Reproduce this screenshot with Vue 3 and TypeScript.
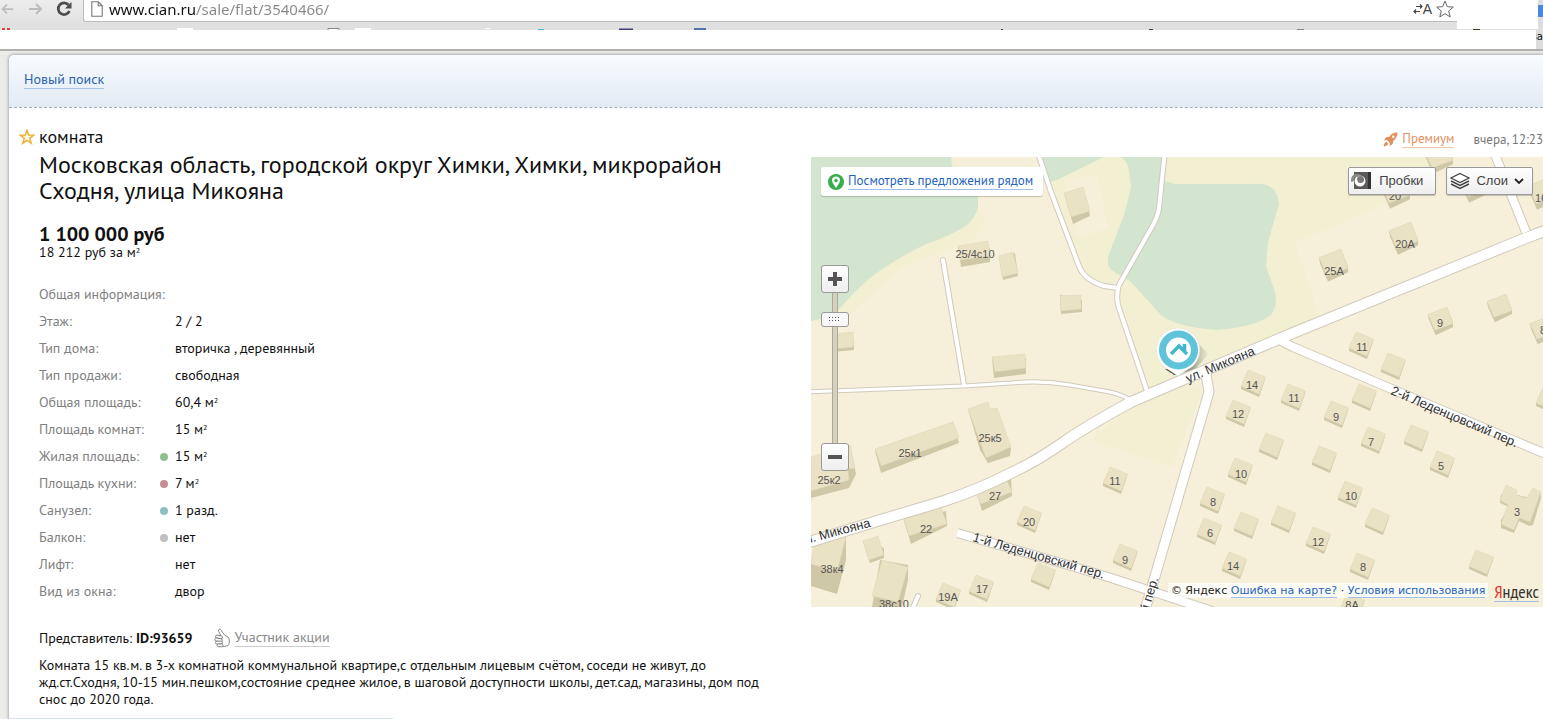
<script setup lang="ts">
import { ref } from 'vue'

interface Fact { label: string; value: string; area?: boolean; dot?: string }
interface Label { x: number; y: number; t: string }

const url = ref('www.cian.ru/sale/flat/3540466/')
const zoom = ref(86)

const facts: Fact[] = [
  { label: 'Общая информация:', value: '' },
  { label: 'Этаж:', value: '2 / 2' },
  { label: 'Тип дома:', value: 'вторичка , деревянный' },
  { label: 'Тип продажи:', value: 'свободная' },
  { label: 'Общая площадь:', value: '60,4', area: true },
  { label: 'Площадь комнат:', value: '15', area: true },
  { label: 'Жилая площадь:', value: '15', area: true, dot: 'green' },
  { label: 'Площадь кухни:', value: '7', area: true, dot: 'red' },
  { label: 'Санузел:', value: '1 разд.', dot: 'teal' },
  { label: 'Балкон:', value: 'нет', dot: 'gray' },
  { label: 'Лифт:', value: 'нет' },
  { label: 'Вид из окна:', value: 'двор' }
]

const description = `Комната 15 кв.м. в 3-х комнатной коммунальной квартире,с отдельным лицевым счётом, соседи не живут, до
жд.ст.Сходня, 10-15 мин.пешком,состояние среднее жилое, в шаговой доступности школы, дет.сад, магазины, дом под
снос до 2020 года.`

const houses: [number, number][] = [
  [1349, 332], [1381, 353], [1324, 401], [1352, 384], [1361, 427], [1404, 425], [1430, 451], [1312, 446],
  [1338, 481], [1365, 508], [1306, 527], [1350, 553], [1469, 550], [1340, 593], [1536, 387], [1241, 370],
  [1281, 384], [1226, 400], [1259, 433], [1228, 458], [1200, 487], [1197, 518], [1234, 512], [1271, 506],
  [1222, 552], [1103, 467], [1113, 544], [1017, 506], [969, 575], [936, 583], [1031, 563]
]
const tilted: [number, number, number][] = [
  [1319, 249, 29], [1389, 222, 29], [1428, 307, 25], [1487, 294, 25], [1530, 316, 25], [1381, 176, 29],
  [1424, 141, 29], [1460, 170, 29], [1528, 177, 29]
]

const labels: Label[] = [
  { x: 975, y: 258, t: '25/4с10' }, { x: 1334, y: 275, t: '25А' }, { x: 1405, y: 248, t: '20А' },
  { x: 1395, y: 200, t: '20' }, { x: 1541, y: 202, t: '16' }, { x: 1440, y: 327, t: '9' },
  { x: 1543, y: 334, t: '8' }, { x: 1362, y: 351, t: '11' }, { x: 1252, y: 389, t: '14' },
  { x: 1294, y: 402, t: '11' }, { x: 1336, y: 421, t: '9' }, { x: 1238, y: 418, t: '12' },
  { x: 1371, y: 446, t: '7' }, { x: 1441, y: 470, t: '5' }, { x: 1241, y: 478, t: '10' },
  { x: 1351, y: 500, t: '10' }, { x: 1213, y: 506, t: '8' }, { x: 1210, y: 537, t: '6' },
  { x: 1318, y: 546, t: '12' }, { x: 1363, y: 571, t: '8' }, { x: 1233, y: 570, t: '14' },
  { x: 1517, y: 516, t: '3' }, { x: 1115, y: 485, t: '11' }, { x: 1125, y: 564, t: '9' },
  { x: 990, y: 442, t: '25к5' }, { x: 910, y: 457, t: '25к1' }, { x: 829, y: 484, t: '25к2' },
  { x: 995, y: 500, t: '27' }, { x: 926, y: 533, t: '22' }, { x: 1029, y: 526, t: '20' },
  { x: 832, y: 573, t: '38к4' }, { x: 894, y: 608, t: '38с10' }, { x: 948, y: 601, t: '19А' },
  { x: 982, y: 593, t: '17' }, { x: 1352, y: 609, t: '8А' }
]

const main = 'M800 545L874 522L944 501Q980 489 1011 473Q1035 462 1061 444Q1085 427 1131 402L1180 381L1293 333L1526 238L1560 225'
const lane = 'M1206 374L1209 392L1151 590L1142 620'
const first = 'M957 533L1051 560L1108 577L1215 612'
const second = 'M1281 341L1293 347L1380 384L1560 460'
const north = 'M1492 147L1526 232'
const paths = 'M1037 150L1051 192L1079 266Q1084 280 1104 286L1118 288M1165 150L1159 208Q1158 216 1153 225L1119 285Q1116 294 1118 305L1148 394M943 260L964 385M918 596L912 610'
const trail = 'M805 392L964 386L1011 383Q1040 380 1070 385L1110 392Q1123 395 1132 401'
</script>

<template>
  <div class="page">
    <header class="browser">
      <div class="toolbar">
        <button class="nav" aria-label="Назад">
          <svg width="16" height="16" viewBox="0 0 16 16"><path d="M15 8H3M8 3L3 8l5 5" fill="none" stroke="#bcbcbc" stroke-width="2" /></svg>
        </button>
        <button class="nav" aria-label="Вперёд">
          <svg width="16" height="16" viewBox="0 0 16 16"><path d="M1 8h12M8 3l5 5-5 5" fill="none" stroke="#bcbcbc" stroke-width="2" /></svg>
        </button>
        <button class="nav" aria-label="Обновить">
          <svg width="16" height="16" viewBox="0 0 16 16"><path d="M12.5 4A5.8 5.8 0 1 0 13.4 10" fill="none" stroke="#4c4c4c" stroke-width="2.8" /><path d="M15.500 1v6.500H9z" fill="#4c4c4c" /></svg>
        </button>
        <div class="address">
          <svg class="doc" width="12" height="16" viewBox="0 0 12 16"><path d="M.8.8h6.400l4 4v10.400H.8zM7.200.8v4h4" fill="#fff" stroke="#777" stroke-width="1.100" /></svg>
          <input v-model="url" class="url" type="text" aria-label="Адрес страницы" spellcheck="false" />
          <button class="translate" aria-label="Перевести">
            <svg width="10" height="12" viewBox="0 0 10 12"><path d="M3 3.500h6M7 1.500l2 2-2 2M7 8.500H1M3 6.500l-2 2 2 2" fill="none" stroke="#444" stroke-width="1.200" /></svg>A
          </button>
          <button class="fav" aria-label="В закладки">
            <svg width="18" height="18" viewBox="0 0 18 18"><path d="M9 1l2.300 5.700 6 .4-4.600 3.900 1.500 5.900L9 13.700l-5.200 3.200 1.500-5.900L.7 7.100l6-.4z" fill="#fff" stroke="#666" /></svg>
          </button>
        </div>
        <div class="corner"><i></i></div>
      </div>
      <div class="bookmarks">
        <svg width="1543" height="3" viewBox="0 0 1543 3">
          <path d="M2 2h3M7 2h3" stroke="#d44" stroke-width="2" />
          <path d="M177 1h16v2h-16zM355 1h16v2h-16zM485 1h5v1h-5z" fill="#fff" />
          <path d="M328 3V1.500h11V3" fill="#fff" stroke="#888" />
          <path d="M538 2h6v1h-6z" fill="#55b8d0" /><path d="M619 1.500h14V3h-14z" fill="#3c3f78" />
          <path d="M694 1h12v2h-12z" fill="#5575aa" /><path d="M1001 2h2v1h-2zM1149 2h4v1h-4z" fill="#444" />
          <path d="M1297 2h7v1h-7z" fill="#888" /><path d="M1473 2h7v1h-7z" fill="#443c20" />
        </svg>
      </div>
      <div class="blank"><span>ва</span></div>
    </header>

    <main class="card">
      <nav class="search"><a href="#">Новый поиск</a></nav>
      <div class="content">
        <section class="info">
          <div class="kind">
            <svg width="16" height="16" viewBox="0 0 16 16"><path d="M8 1.400l1.700 4.700 5 .1-4 3.100 1.500 4.900L8 11.300l-4.200 2.900 1.500-4.900-4-3.100 5-.1z" fill="#fff8e6" stroke="#eeb13c" stroke-width="1.500" /></svg>
            <span>комната</span>
          </div>
          <h1>Московская область, городской округ Химки, Химки, микрорайон<br />Сходня, улица Микояна</h1>
          <div class="price">1 100 000 руб</div>
          <div class="rate">18 212 руб за м<sup>2</sup></div>
          <table>
            <tbody>
              <tr v-for="f in facts" :key="f.label">
                <th scope="row">{{ f.label }}</th>
                <td class="mark"><i v-if="f.dot" :class="f.dot"></i></td>
                <td>{{ f.value }}<template v-if="f.area"> м<sup>2</sup></template></td>
              </tr>
            </tbody>
          </table>
          <div class="agent">
            <span>Представитель: <b>ID:93659</b></span>
            <svg width="16" height="20" viewBox="0 0 16 20"><g fill="#fff" stroke="#777" stroke-width=".9"><path d="M7 8.500C6.500 6 4.500 4 4.500 2.500 4.500 1 6 .5 7 2c1 1.700 2.500 4 4 5.500 2 .3 4 2 4.300 4.500.2 2.500-.3 4.500-1.300 5.500-2 .7-4.500 1.200-6 1.200z" /><rect x="1.500" y="7.500" width="7" height="3" rx="1.500" transform="rotate(12 5 9)" /><rect x=".8" y="10.300" width="7.500" height="3" rx="1.500" transform="rotate(8 4 12)" /><rect x="1.500" y="13.200" width="7" height="2.800" rx="1.400" /><rect x="3" y="16" width="6" height="2.700" rx="1.300" /></g></svg>
            <a href="#">Участник акции</a>
          </div>
          <p class="description">{{ description }}</p>
        </section>

        <section class="side">
          <div class="meta">
            <svg width="15" height="15" viewBox="0 0 15 15"><path d="M14.500.5c-4-.2-6.500 1.700-8.300 4.300L3 5.200.8 8.400l3-.4L7 11.200l-.5 3 3.200-2.200.5-3.200c2.700-1.900 4.500-4.500 4.300-8.300zM3.500 9.800C1.500 10.500 1 12.500.6 14.500c2-.3 4-1 4.600-3z" fill="#e2905f" /><circle cx="10.300" cy="4.700" r="1.200" fill="#fff" /></svg>
            <a href="#">Премиум</a>
            <time>вчера, 12:23</time>
          </div>
          <div class="map">
            <svg class="canvas" viewBox="811 157 732 450" preserveAspectRatio="xMinYMin slice" role="img" aria-label="Карта">
              <defs>
                <g id="house">
                  <path d="M0 16L0 19L18 27L24 10L24.500 7L18 24z" fill="#cfc8a8" />
                  <path d="M7 0L24.500 7L18 24L0 16z" fill="#e9e2c4" stroke="#ddd5b4" stroke-width=".5" />
                </g>
                <g id="block">
                  <path d="M0 9L22 1L29 19V24L9 34L1 15z" fill="#cfc8a8" />
                  <path d="M0 9L22 0L29 20L8 28z" fill="#e9e2c4" stroke="#ddd5b4" stroke-width=".5" />
                </g>
                <linearGradient id="shadow" x1="0.35" x2="1"><stop offset="0" stop-color="#444" stop-opacity=".9" /><stop offset="1" stop-color="#777" stop-opacity="0" /></linearGradient>
              </defs>
              <path d="M811 157h740v460H811z" fill="#f6f0da" />
              <path d="M950 157H1040L1045 176L1082 270L1104 288H1118L1148 396L1285 340L1320 318L1295 243L1382 205L1450 157zM811 321L840 324L900 268L975 240L985 220V195L950 157zM1091 441L1172 467L1203 390L1190 382L1131 404z" fill="#f3efd2" />
              <path d="M1064 180L1098 175L1108 228L1078 238zM951 157H1040L1080 262L1000 262L985 220z" fill="#f6f0da" />
              <path d="M811 157H951L952 167L972 185L978 197V208Q975 217 969 223Q962 231 924 245Q900 257 884 268Q868 278 854 293L838 310Q828 318 811 321zM1041 157L1050 182L1057 180L1104 157zM1121 157Q1128 162 1129 170L1131 187L1124 215L1108 257Q1107 265 1111 270L1130 281L1161 315Q1176 327 1217 330Q1255 327 1271 315Q1278 305 1275 292L1266 266L1268 242L1279 204Q1278 191 1269 186Q1262 183 1250 184H1174L1165 181L1166 157z" fill="#d3e5ce" />

              <g fill="#cfc8a8">
                <path d="M811 460L850 445L856 474L849 488L811 498z" /><path d="M875 451L953 422L959 443L881 473z" />
                <path d="M968 409L1011 448L1010 456L988 463L980 450z" /><path d="M976 490L1011 478L1012 496L982 511z" />
                <path d="M904 521L946 511L947 526L911 544z" /><path d="M811 564L846 537V560L837 594L811 586z" />
                <path d="M880 560L908 565L908 580L902 607H872z" /><path d="M863 541L884 548V558L870 563z" />
                <path d="M958 246L990 248V262L961 267z" /><path d="M1000 258L1015 253L1018 276L1003 280z" />
                <path d="M992 358L1026 358V374L994 378z" /><path d="M1060 295L1082 300V312L1061 314z" />
                <path d="M833 334L854 342V350L833 352z" /><path d="M1064 193L1088 205L1090 216L1073 224z" />
                <path d="M1501 494L1509 506L1517 495L1530 498L1541 492V498L1533 525L1529 526L1519 521L1514 533L1501 528V520L1509 507L1500 503z" />
              </g>
              <g fill="#e9e2c4" stroke="#ddd5b4" stroke-width=".5">
                <path d="M811 457L850 445L855 468L848 469L849 480L811 491z" /><path d="M875 449L953 422L959 438L881 466z" />
                <path d="M968 409L988 402L990 409L997 408L1011 447L986 458L980 442z" /><path d="M976 493L1007 480L1012 492L981 504z" />
                <path d="M904 519L941 507L947 524L909 536z" /><path d="M815 540L846 537L837 572L811 564z" />
                <path d="M882 560L908 567L898 602L872 596z" /><path d="M863 541L878 536L884 555L869 560z" />
                <path d="M958 246L988 241L990 256L960 260z" /><path d="M999 256L1013 252L1018 273L1002 277z" />
                <path d="M992 357L1025 354L1026 368L995 372z" /><path d="M1060 296L1081 295V309L1061 311z" />
                <path d="M833 334L853 332L854 347L833 349z" /><path d="M1064 193L1083 187L1090 211L1071 217z" />
                <path d="M1506 485L1517 490L1516 495L1527 498L1533 488L1541 492L1530 522L1519 518L1514 530L1501 524L1508 505L1500 500z" />
              </g>
              <use v-for="(h, i) in tilted" :key="'t' + i" href="#block" :transform="`translate(${h[0]} ${h[1]}) scale(${h[2] / 29} ${h[2] / 30})`" />
              <use v-for="(h, i) in houses" :key="'h' + i" href="#house" :transform="`translate(${h[0]} ${h[1]})`" />

              <g fill="none" stroke-linejoin="round" stroke="#cfcabb">
                <path :d="paths" stroke-width="6" stroke-linecap="round" /><path :d="trail" stroke-width="5" />
                <path :d="main" stroke-width="12" /><path :d="lane" stroke-width="11" />
                <path :d="first" stroke-width="10" /><path :d="second" stroke-width="10" /><path :d="north" stroke-width="10" />
              </g>
              <g fill="none" stroke-linejoin="round" stroke="#fff">
                <path :d="paths" stroke-width="4" stroke-linecap="round" /><path :d="trail" stroke-width="3" />
                <path :d="main" stroke-width="10" /><path :d="lane" stroke-width="9" />
                <path :d="first" stroke-width="8" /><path :d="second" stroke-width="8" /><path :d="north" stroke-width="8" />
              </g>
              <g class="numbers"><text v-for="(l, i) in labels" :key="i" :x="l.x" :y="l.y">{{ l.t }}</text></g>
              <g class="streets">
                <text transform="translate(1188 383) rotate(-23)">ул. Микояна</text>
                <text transform="translate(806 544) rotate(-15)">л. Микояна</text>
                <text transform="translate(972 541) rotate(16)">1-й Леденцовский пер.</text>
                <text transform="translate(1390 394) rotate(23)">2-й Леденцовский пер.</text>
                <text transform="translate(1148 613) rotate(-73)">й пер.</text>
              </g>
              <path d="M1166 369l6 1 8 5h-6zM1180 374L1196 368L1209 354L1194 340z" fill="url(#shadow)" />
              <path d="M1165 369l5 0 6 4h-5z" fill="#555" />
              <path d="M1178 328a22 22 0 0 1 9 42l-9 6-9-6a22 22 0 0 1 9-42z" fill="#fff" stroke="#d8d8c8" stroke-width=".5" />
              <circle cx="1178.500" cy="350" r="16" fill="#fff" stroke="#5fc4da" stroke-width="7" />
              <path d="M1171 354l8-8 8 8M1184.500 344v7" fill="none" stroke="#45b7cc" stroke-width="3.500" />
            </svg>

            <a class="nearby" href="#">
              <svg width="16" height="16" viewBox="0 0 16 16"><circle cx="8" cy="8" r="8" fill="#37ae4b" /><path d="M8 14C6 10.500 4 8.500 4 6.500a4 4 0 0 1 8 0C12 8.500 10 10.500 8 14z" fill="#fff" /><circle cx="8" cy="6.500" r="1.700" fill="#37ae4b" /></svg>
              <span>Посмотреть предложения рядом</span>
            </a>
            <div class="tools">
              <button class="tool traffic">
                <svg width="20" height="18" viewBox="0 0 20 18"><path d="M3 0h17v17H3z" fill="#5a5a5a" /><path d="M17 0h3v17h-3z" fill="#333" /><circle cx="9" cy="9" r="5.500" fill="#fff" /><circle cx="9.500" cy="7.500" r="3.500" fill="#777" /><path d="M1.500 9.500C1 5 4 2.500 8 3.500" fill="none" stroke="#888" stroke-width="3" /><path d="M5 4.500c-1 4 0 7 3 9l-2-6z" fill="#fff" /></svg>
                <span>Пробки</span>
              </button>
              <button class="tool layers" aria-haspopup="menu">
                <svg width="20" height="18" viewBox="0 0 20 18"><path d="M10 1.500l9 4.500-9 4.500L1 6z" fill="#fff" stroke="#444" stroke-width="1.200" /><path d="M1 9l9 4.500L19 9M1 12l9 4.500 9-4.500" fill="none" stroke="#444" stroke-width="1.400" /></svg>
                <span>Слои</span>
                <svg width="10" height="6" viewBox="0 0 10 6"><path d="M1 1l4 4 4-4" fill="none" stroke="#222" stroke-width="1.800" /></svg>
              </button>
            </div>
            <div class="zoom">
              <button aria-label="Приблизить"><svg width="14" height="14" viewBox="0 0 14 14"><path d="M7 0v14M0 7h14" stroke="#555" stroke-width="4" /></svg></button>
              <input v-model="zoom" type="range" min="0" max="100" aria-label="Масштаб" />
              <button aria-label="Отдалить"><svg width="14" height="14" viewBox="0 0 14 14"><path d="M0 7h14" stroke="#555" stroke-width="4" /></svg></button>
            </div>
            <div class="legal">
              <span class="copy">© Яндекс <a href="#">Ошибка на карте?</a> · <a href="#">Условия использования</a></span>
              <a class="logo" href="#"><b>Я</b>ндекс</a>
            </div>
          </div>
        </section>
      </div>
      <hr />
    </main>
  </div>
</template>

<style>
body { margin: 0; background: #fff; overflow: hidden; }
</style>

<style scoped>
* { box-sizing: border-box; }
.page { font: 14px/17px "PT Sans", "Noto Sans", sans-serif; color: #111; background: #ecece9; min-height: 100vh; display: flex; flex-direction: column; }
button { border: 0; padding: 0; background: none; font: inherit; color: inherit; display: flex; align-items: center; justify-content: center; }
.browser { flex: none; border-bottom: 2px solid #b0b0ae; background: #fff; }
.toolbar { height: 23px; display: flex; background: linear-gradient(#ededed, #e2e2e2); }
.nav { width: 28px; height: 18px; }
.nav:first-child { width: 14px; justify-content: flex-end; margin-right: 8px; }
.nav:nth-child(3) { margin-right: 5px; }
.address { flex: 1; height: 22px; display: flex; align-items: flex-start; background: #fff; border: 1px solid #bbb; border-width: 0 0 1px 1px; border-radius: 0 0 0 3px; padding-left: 7px; }
.doc { margin-top: 1px; }
.url { flex: 1; min-width: 0; height: 19px; border: 0; outline: 0; padding: 0; margin-left: 6px; font: 15px/19px "Noto Sans", sans-serif; color: transparent; background: linear-gradient(90deg, #111 86px, #888 86px); -webkit-background-clip: text; background-clip: text; }
.translate { height: 18px; font: 14px/18px "Liberation Sans", sans-serif; color: #444; }
.fav { margin: 0 3px 0 4px; }
.corner { flex: none; width: 86px; height: 29px; margin-bottom: -6px; background: #fff; border-right: 5px solid #ddd; display: flex; justify-content: flex-end; z-index: 1; }
.corner i { width: 5px; height: 12px; margin: 5px -5px 0 0; background: #4a86e8; }
.bookmarks { height: 7px; background: #e0e0e0; display: flex; align-items: flex-end; overflow: hidden; }
.bookmarks svg { flex: none; display: block; }
.blank { height: 19px; display: flex; justify-content: flex-end; }
.blank span { width: 7px; background: #ddd; font: 10px/14px "DejaVu Sans", sans-serif; overflow: hidden; display: flex; justify-content: flex-end; }

.card { flex: 1; display: flex; flex-direction: column; margin: 4px 0 0 9px; background: #fff; border-radius: 5px 0 0 0; box-shadow: 0 0 3px 1px #aaaeb6; }
.search { height: 53px; padding: 16px 15px 0; background: linear-gradient(#f7fbff, #e2ebf4); border-bottom: 1px dashed #aab; border-radius: 5px 0 0 0; }
.search a { color: #2c62b0; text-decoration: none; border-bottom: 1px solid #a9c3e6; }
.content { display: grid; grid-template-columns: 802fr 732fr; }
.info { padding: 17px 0 0 30px; min-width: 0; }
.kind { display: flex; align-items: center; gap: 4px; margin-left: -20px; font-size: 18px; line-height: 24px; }
h1 { margin: 3px 0 0; font-size: 24px; line-height: 26px; font-weight: 400; white-space: nowrap; }
.price { margin-top: 18px; font-size: 20px; line-height: 24px; font-weight: 700; }
.rate { line-height: 12px; }
sup { font-size: 8px; line-height: 1px; vertical-align: 4px; }
table { margin-top: 23px; border-collapse: collapse; }
th, td { height: 27px; padding: 0; font-weight: 400; text-align: left; }
th { width: 121px; color: #808080; white-space: nowrap; max-width: 121px; }
.mark { width: 15px; }
.mark i { display: block; width: 8px; height: 8px; border-radius: 50%; }
.green { background: #8fc092; }
.red { background: #c48d8f; }
.teal { background: #8dbfbf; }
.gray { background: #c0c0c2; }
.agent { display: flex; align-items: center; gap: 4px; margin-top: 23px; height: 20px; }
.agent svg { margin-left: 18px; }
.agent a { color: #8a8a8a; text-decoration: none; border-bottom: 1px solid #ccc; }
.description { margin: 9px 0 0; white-space: pre; }
hr { width: 25%; height: 1px; margin: auto auto 0 0; border: 0; background: #cfe3ee; }

.meta { display: flex; justify-content: flex-end; align-items: center; height: 49px; padding-top: 13px; gap: 4px; font-size: 13px; color: #777; }
.meta a { color: #e2905f; text-decoration: none; border-bottom: 1px solid #f0c4a8; }
.meta time { margin-left: 15px; }
.map { position: relative; overflow: hidden; }
.canvas { display: block; width: 100%; height: 450px; }
.numbers text { font: 11px "Liberation Sans", sans-serif; fill: #555; text-anchor: middle; }
.streets text { font: 13px "Liberation Sans", sans-serif; fill: #333; }
.nearby { position: absolute; left: 10px; top: 10px; height: 29px; padding: 0 10px 0 7px; display: flex; align-items: center; gap: 4px; background: #fff; border-radius: 3px; box-shadow: 0 1px 1px #0003; text-decoration: none; font-size: 13px; }
.nearby span { color: #2463c0; border-bottom: 1px solid #a0c0ea; line-height: 16px; white-space: nowrap; }
.tools { position: absolute; right: 10px; top: 10px; display: flex; gap: 10px; }
.tool { height: 28px; border: 1px solid #999; border-radius: 2px; background: linear-gradient(#fff, #eee); box-shadow: 0 1px 1px #0003; font: 13px/16px "Liberation Sans", sans-serif; color: #444; padding: 0 12px 0 2px; gap: 8px; }
.layers { padding: 0 8px 0 3px; gap: 6px; }
.zoom { position: absolute; left: 10px; top: 108px; width: 28px; display: flex; flex-direction: column; align-items: center; }
.zoom button { width: 28px; height: 28px; border: 1px solid #999; border-radius: 3px; background: linear-gradient(#fff, #eee); }
.zoom input { appearance: none; writing-mode: vertical-lr; direction: rtl; width: 28px; height: 150px; margin: 0; background: linear-gradient(90deg, transparent 11px, #aaa89a 11px 12px, #d5d1bd 12px 16px, #aaa89a 16px 17px, transparent 17px); }
.zoom input::-webkit-slider-thumb { appearance: none; width: 28px; height: 15px; border: 1px solid #999; border-radius: 3px; background: repeating-linear-gradient(90deg, #555 0 1px, transparent 1px 3px) center 4px / 12px 1px no-repeat, repeating-linear-gradient(90deg, #555 0 1px, transparent 1px 3px) center 7px / 12px 1px no-repeat, #f8f8f8; }
.legal { position: absolute; right: 4px; bottom: 5px; display: flex; align-items: flex-end; gap: 6px; font: 11px/15px "DejaVu Sans", sans-serif; color: #222; white-space: nowrap; }
.copy { background: #fffb; padding: 0 3px; margin-bottom: 4px; }
.copy a { color: #2463c0; text-decoration: none; border-bottom: 1px solid #a0c0ea; }
.logo { font: 18px/19px "PT Sans Narrow", "Liberation Sans Narrow", "PT Sans", sans-serif; color: #333; text-decoration: none; border-bottom: 1px solid #a0c0ea; }
.logo b { font-weight: 400; color: #e5382c; }
</style>
